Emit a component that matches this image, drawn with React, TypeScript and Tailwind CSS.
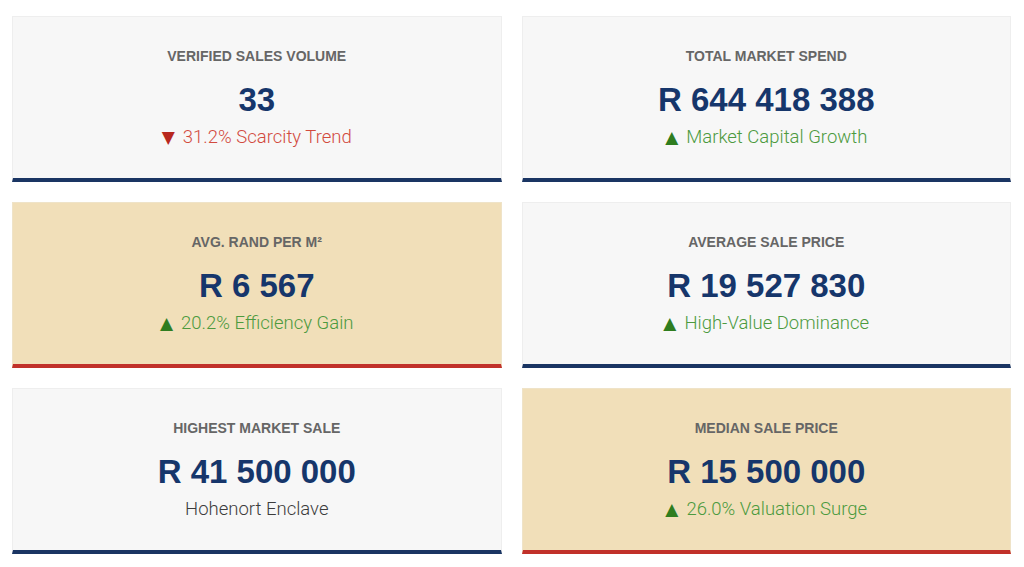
import React from "react";

type Card = {
  label: string;
  value: string;
  sub: string;
  trend: "up" | "down" | "none";
  beige?: boolean;
  accent: "navy" | "red";
};

const cards: Card[] = [
  { label: "Verified Sales Volume", value: "33", sub: "31.2% Scarcity Trend", trend: "down", accent: "navy" },
  { label: "Total Market Spend", value: "R 644 418 388", sub: "Market Capital Growth", trend: "up", accent: "navy" },
  { label: "Avg. Rand per m²", value: "R 6 567", sub: "20.2% Efficiency Gain", trend: "up", beige: true, accent: "red" },
  { label: "Average Sale Price", value: "R 19 527 830", sub: "High-Value Dominance", trend: "up", accent: "navy" },
  { label: "Highest Market Sale", value: "R 41 500 000", sub: "Hohenort Enclave", trend: "none", accent: "navy" },
  { label: "Median Sale Price", value: "R 15 500 000", sub: "26.0% Valuation Surge", trend: "up", beige: true, accent: "red" },
];

function KpiCard({ c }: { c: Card }) {
  const bg = c.beige ? "bg-[#f1dfb9] border-[#efe3c8]" : "bg-[#f7f7f7] border-[#eeeeee]";
  const accent = c.accent === "red" ? "border-b-[#c1312a]" : "border-b-[#1a3563]";
  const subColor =
    c.trend === "down" ? "text-[#d24a3e]" : c.trend === "up" ? "text-[#4c9a3e]" : "text-[#3c3c3c]";
  return (
    <div
      className={`flex flex-col items-center border border-b-4 ${bg} ${accent} pt-[29px] pb-[29px] text-center`}
    >
      <div className="text-[14px] leading-[20px] font-bold uppercase text-[#666666]">{c.label}</div>
      <div className="mt-[13px] text-[33px] leading-[41px] font-bold text-[#16366b]">{c.value}</div>
      <div
        className={`mt-[5px] text-[18.5px] leading-[24px] font-light font-['Roboto','Liberation_Sans',sans-serif] ${subColor}`}
      >
        {c.trend === "down" && (
          <span className="mr-[8px] text-[#b8281e] text-[17px] font-normal font-['DejaVu_Sans',sans-serif]">▼</span>
        )}
        {c.trend === "up" && (
          <span className="mr-[8px] text-[#2f7d1f] text-[17px] font-normal font-['DejaVu_Sans',sans-serif]">▲</span>
        )}
        {c.sub}
      </div>
    </div>
  );
}

export default function App() {
  return (
    <div className="w-[1024px] h-[567px] bg-white pt-[16px] pl-[12px] pr-[13px] font-['Liberation_Sans',Arial,sans-serif]">
      <div className="grid grid-cols-2 gap-x-[20px] gap-y-[20px]">
        {cards.map((c) => (
          <KpiCard key={c.label} c={c} />
        ))}
      </div>
    </div>
  );
}
